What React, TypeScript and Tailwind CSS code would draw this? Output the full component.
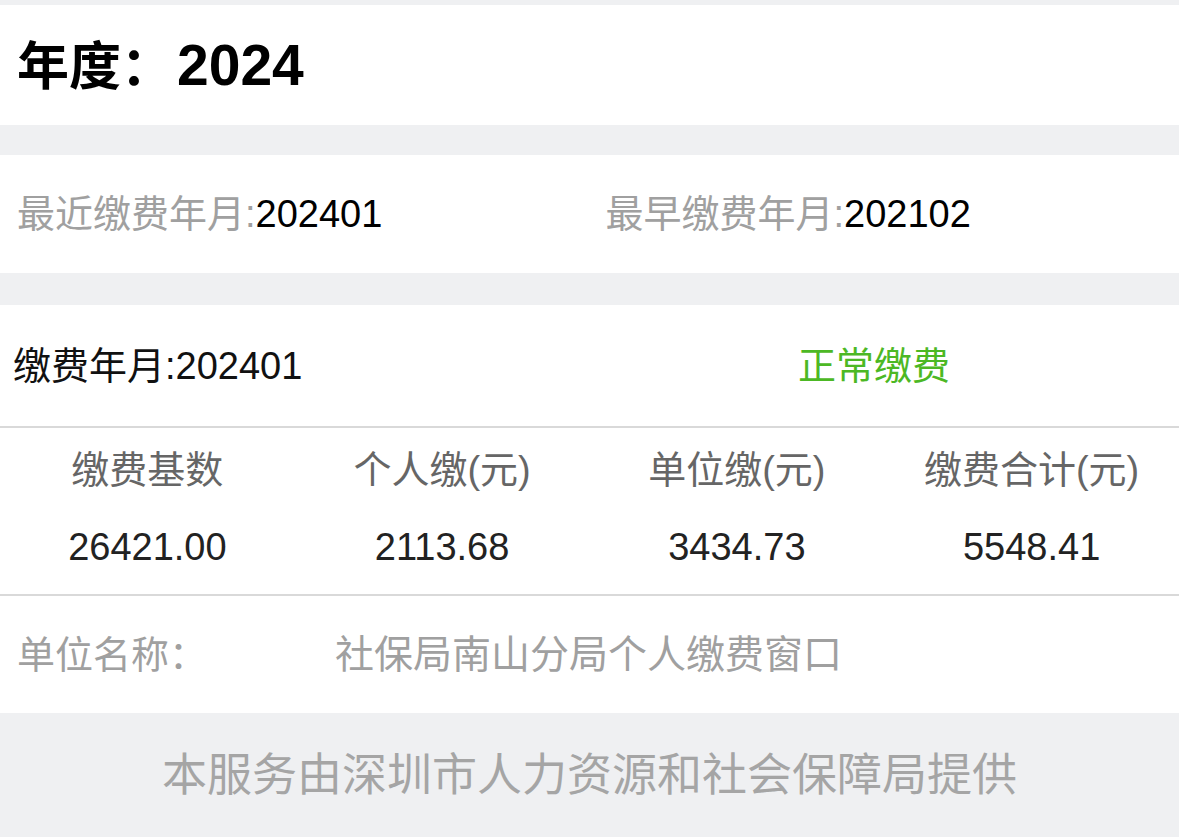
const font = { fontFamily: '"Liberation Sans", "Noto Sans CJK SC", sans-serif' }

const columns = [
  { label: '缴费基数', value: '26421.00' },
  { label: '个人缴(元)', value: '2113.68' },
  { label: '单位缴(元)', value: '3434.73' },
  { label: '缴费合计(元)', value: '5548.41' },
]

function Divider() {
  return <div className="h-[2px] bg-[#d9d9d9]" />
}

export default function App() {
  return (
    <div className="min-h-[837px] bg-[#eff0f2] pt-[5px]" style={font}>
      <section className="flex h-[120px] items-center bg-white px-[17px]">
        <h1 className="flex items-baseline font-bold leading-none text-black">
          <span className="text-[52px]">年度：</span>
          <span className="ml-[4px] text-[57px]">2024</span>
        </h1>
      </section>

      <section className="mt-[30px] grid h-[118px] grid-cols-2 items-center bg-white text-[38px] leading-none">
        <p className="pl-[17px]">
          <span className="text-[#a0a0a0]">最近缴费年月:</span>
          <span className="text-black">202401</span>
        </p>
        <p className="pl-[16px]">
          <span className="text-[#a0a0a0]">最早缴费年月:</span>
          <span className="text-black">202102</span>
        </p>
      </section>

      <section className="mt-[32px] bg-white">
        <div className="grid h-[121px] grid-cols-3 items-center text-[38px] leading-none">
          <p className="col-span-2 pl-[13px] text-[#111]">缴费年月:202401</p>
          <p className="pl-[12px] text-[#4cb824]">正常缴费</p>
        </div>
        <Divider />
        <div className="grid h-[166px] grid-cols-4 text-center text-[38px] leading-none">
          {columns.map((c) => (
            <div key={c.label} className="flex flex-col items-center pt-[23px]">
              <span className="text-[#666]">{c.label}</span>
              <span className="mt-[39px] text-[#222]">{c.value}</span>
            </div>
          ))}
        </div>
        <Divider />
        <div className="flex h-[117px] items-center text-[38px] leading-none text-[#a0a0a0]">
          <span className="w-[335px] pl-[17px]">单位名称：</span>
          <span className="text-[39px]">社保局南山分局个人缴费窗口</span>
        </div>
      </section>

      <footer className="flex h-[124px] items-center justify-center">
        <p className="text-[45px] leading-none text-[#a5a5a5]">本服务由深圳市人力资源和社会保障局提供</p>
      </footer>
    </div>
  )
}
